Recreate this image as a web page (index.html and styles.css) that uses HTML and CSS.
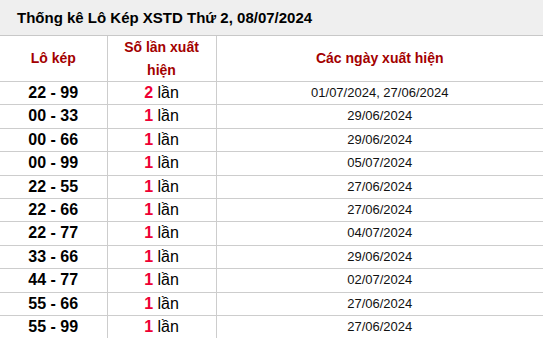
FILE: index.html
```html
<!DOCTYPE html>
<html lang="vi">
<head>
<meta charset="utf-8">
<link rel="stylesheet" href="styles.css">
</head>
<body>
<div class="box">
  <div class="title"><strong>Thống kê Lô Kép XSTD</strong> <span class="sub">Thứ 2, 08/07/2024</span></div>
  <table class="tbl">
    <colgroup><col class="c1"><col class="c2"><col class="c3"></colgroup>
    <thead>
      <tr><th>Lô kép</th><th>Số lần xuất<br>hiện</th><th>Các ngày xuất hiện</th></tr>
    </thead>
    <tbody>
      <tr><td class="pair">22 - 99</td><td><b class="n">2</b> lần</td><td class="d">01/07/2024, 27/06/2024</td></tr>
      <tr><td class="pair">00 - 33</td><td><b class="n">1</b> lần</td><td class="d">29/06/2024</td></tr>
      <tr><td class="pair">00 - 66</td><td><b class="n">1</b> lần</td><td class="d">29/06/2024</td></tr>
      <tr><td class="pair">00 - 99</td><td><b class="n">1</b> lần</td><td class="d">05/07/2024</td></tr>
      <tr><td class="pair">22 - 55</td><td><b class="n">1</b> lần</td><td class="d">27/06/2024</td></tr>
      <tr><td class="pair">22 - 66</td><td><b class="n">1</b> lần</td><td class="d">27/06/2024</td></tr>
      <tr><td class="pair">22 - 77</td><td><b class="n">1</b> lần</td><td class="d">04/07/2024</td></tr>
      <tr><td class="pair">33 - 66</td><td><b class="n">1</b> lần</td><td class="d">29/06/2024</td></tr>
      <tr><td class="pair">44 - 77</td><td><b class="n">1</b> lần</td><td class="d">02/07/2024</td></tr>
      <tr><td class="pair">55 - 66</td><td><b class="n">1</b> lần</td><td class="d">27/06/2024</td></tr>
      <tr><td class="pair">55 - 99</td><td><b class="n">1</b> lần</td><td class="d">27/06/2024</td></tr>
    </tbody>
  </table>
</div>
</body>
</html>
```
FILE: styles.css
```css
html, body { margin: 0; padding: 0; background: #fff; }
body { font-family: "Liberation Sans", Arial, sans-serif; color: #000; overflow: hidden; }
.box { width: 543px; }
.title {
  height: 36px;
  box-sizing: border-box;
  background: #efefef;
  border-bottom: 1px solid #c8c8c8;
  padding: 0 0 0 17px;
  font-size: 15px;
  line-height: 35px;
  font-weight: bold;
  color: #000;
  white-space: nowrap;
}
.title .sub { font-weight: bold; }
.tbl { width: 543px; border-collapse: collapse; table-layout: fixed; }
.c1 { width: 107px; }
.c2 { width: 109px; }
.tbl th, .tbl td {
  border-bottom: 1px solid #cdcdcd;
  text-align: center;
  padding: 3px 0;
}
.tbl th + th, .tbl td + td { border-left: 1px solid #cdcdcd; }
.tbl th {
  color: #a30000;
  font-size: 14px;
  line-height: 22.5px;
  padding: 0;
  font-weight: bold;
}
.tbl td { font-size: 16px; line-height: 16.4px; }
.tbl td.pair { font-weight: bold; }
.n { color: #ee0033; }
.tbl td.d { font-size: 13px; color: #111; }
```
